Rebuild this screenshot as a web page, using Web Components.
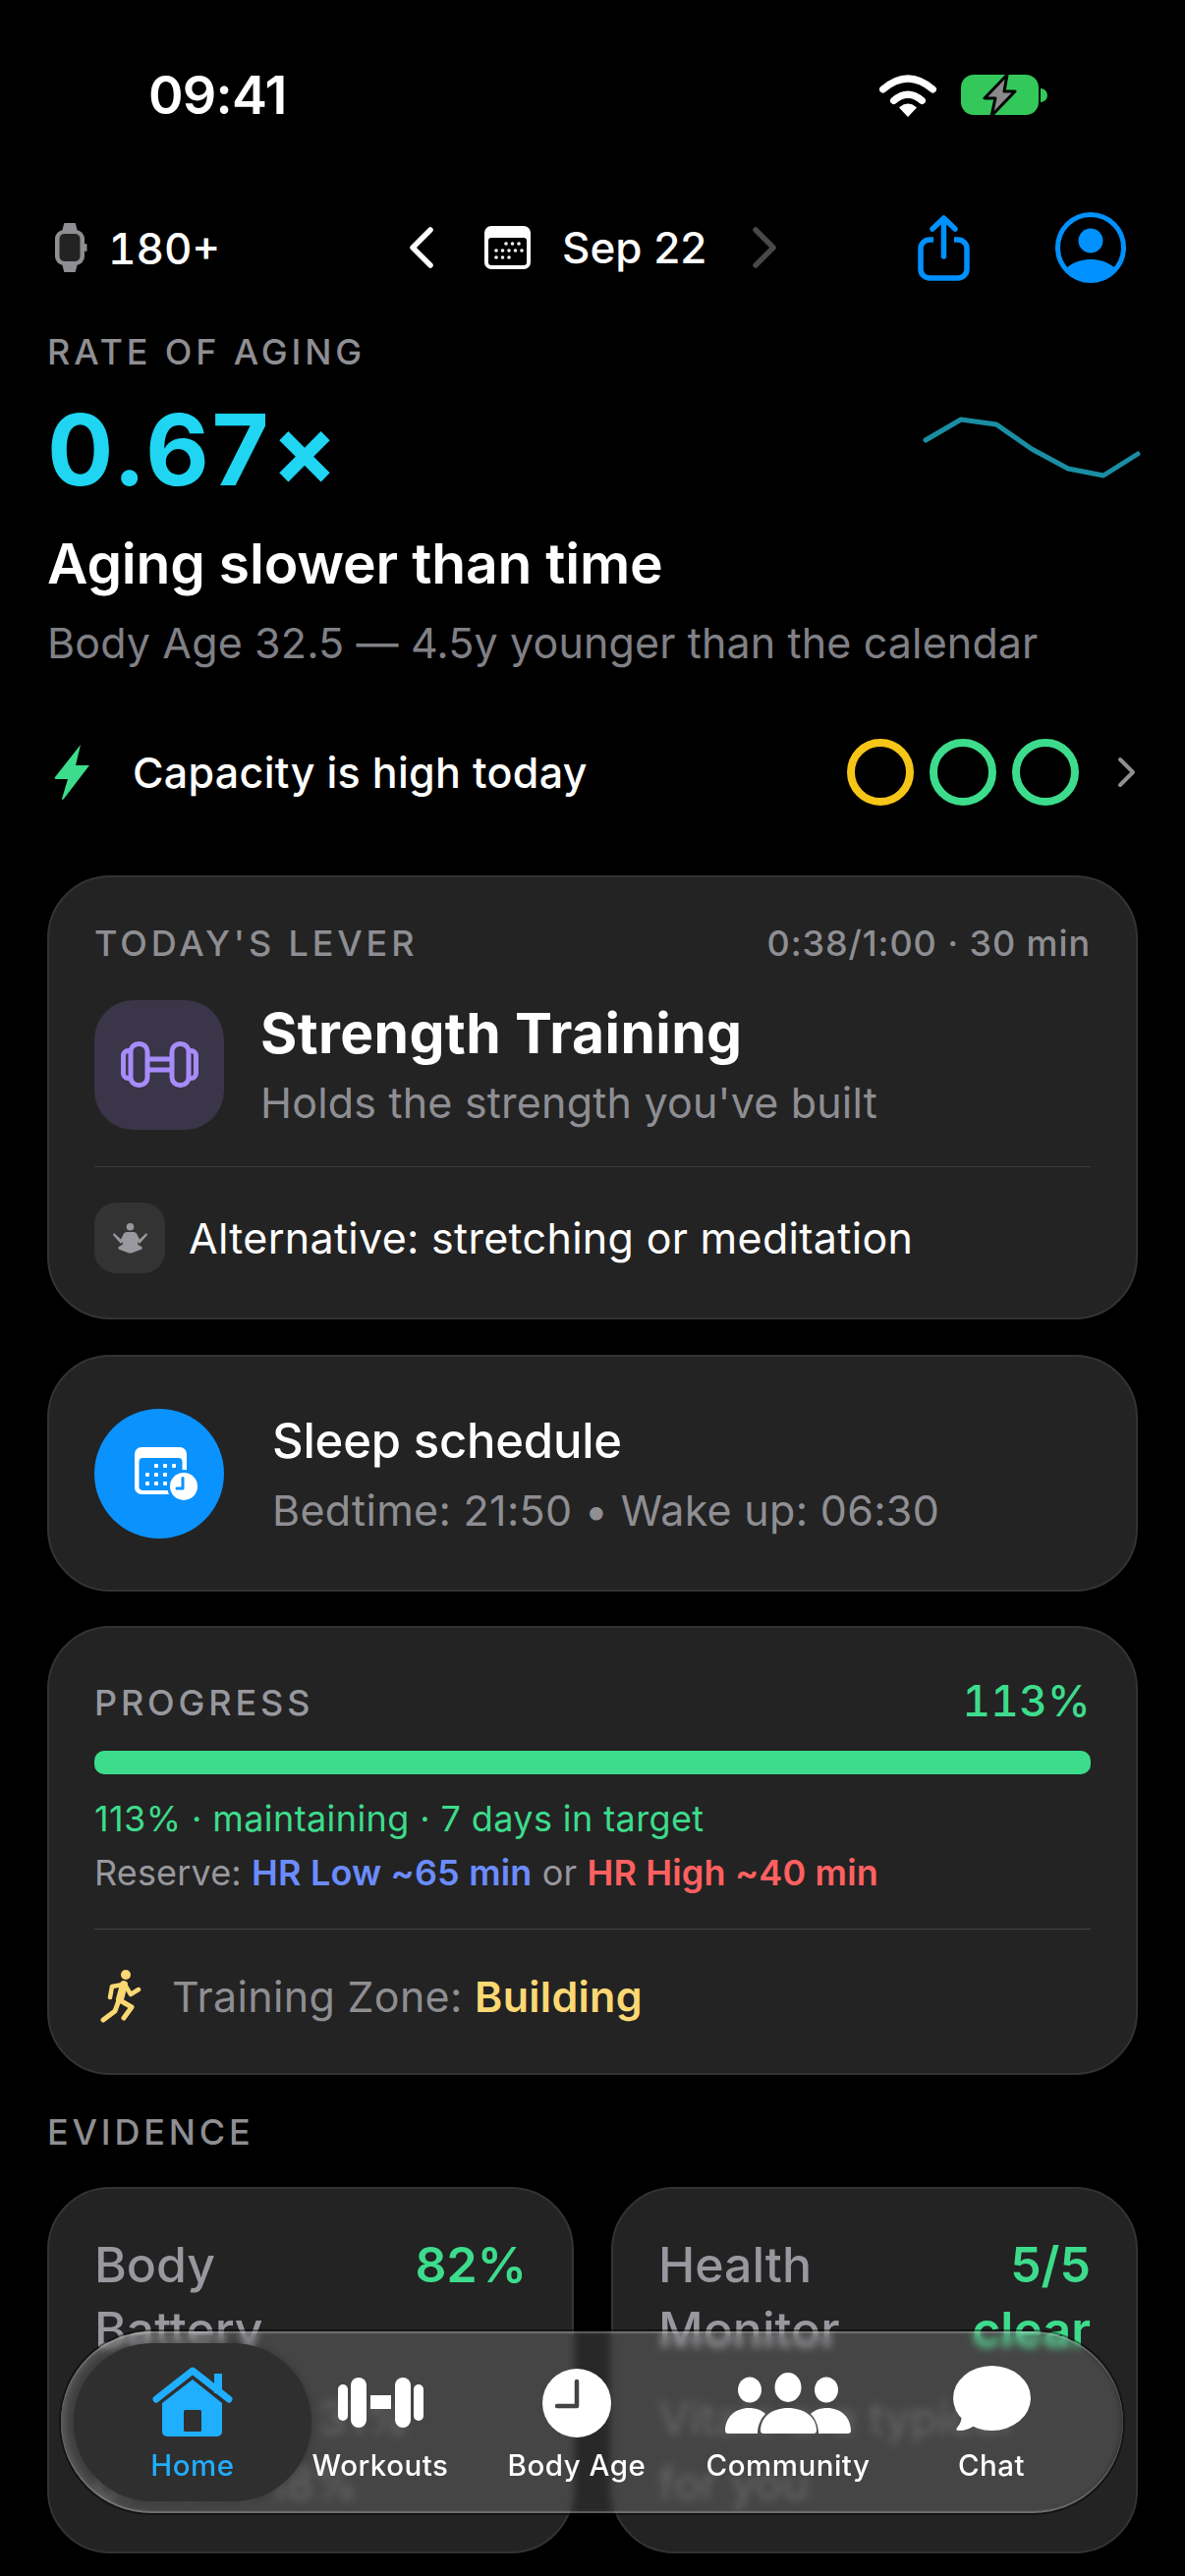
<!DOCTYPE html>
<html>
<head>
<meta charset="utf-8">
<title>Rate of Aging</title>
<style>
    html, body { margin: 0; background: #000; }
    body { font-family: Inter, "Liberation Sans", sans-serif; color: #fff; }
</style>
</head>
<body>
<app-shell>
    <status-bar></status-bar>
    <top-bar></top-bar>
    <aging-hero></aging-hero>
    <capacity-row></capacity-row>
    <lever-card></lever-card>
    <sleep-card></sleep-card>
    <progress-card></progress-card>
    <evidence-grid></evidence-grid>
    <tab-bar slot="overlay"></tab-bar>
</app-shell>

<script>
class AppShell extends HTMLElement {
    constructor() {
        super();
        this.attachShadow({ mode: 'open' });
    }

    connectedCallback() {
        this.shadowRoot.innerHTML = `
            <style>
                :host {
                    display: block;
                    position: relative;
                    width: 1206px;
                    height: 2622px;
                    overflow: hidden;
                    background: #000;
                    font-family: Inter, "Liberation Sans", sans-serif;
                }
                .page {
                    display: flex;
                    flex-direction: column;
                    padding: 0 48px;
                }
            </style>
            <div class="page"><slot></slot></div>
            <slot name="overlay"></slot>
        `;
    }
}

class AppCard extends HTMLElement {
    constructor() {
        super();
        this.attachShadow({ mode: 'open' });
    }

    connectedCallback() {
        this.shadowRoot.innerHTML = `
            <style>
                :host {
                    display: block;
                    box-sizing: border-box;
                    background: #232323;
                    border: 2px solid #333;
                    border-radius: 64px;
                }
            </style>
            <slot></slot>
        `;
    }
}

class StatusBar extends HTMLElement {
    constructor() {
        super();
        this.attachShadow({ mode: 'open' });
    }

    connectedCallback() {
        this.shadowRoot.innerHTML = `
            <style>
                :host {
                    display: flex;
                    align-items: center;
                    height: 70px;
                    margin: 62px 93px 0 103px;
                }
                .time {
                    font-size: 54px;
                    font-weight: 600;
                    letter-spacing: -0.800px;
                    color: #fff;
                    flex: 1;
                    line-height: 70px;
                }
                .icons { display: flex; align-items: center; gap: 25px; }
                svg { display: block; overflow: visible; }
            </style>
            <div class="time">09:41</div>
            <div class="icons">
                <svg width="58" height="42" viewBox="0 0 58 42">
                    <path d="M3.500 15 Q29 -7 54.500 15" fill="none" stroke="#fff" stroke-width="7" stroke-linecap="round"/>
                    <path d="M14.500 26.500 Q29 14 43.500 26.500" fill="none" stroke="#fff" stroke-width="7" stroke-linecap="round"/>
                    <path d="M21 33.500 Q29 27 37 33.500 L29 42 Z" fill="#fff" stroke="#fff" stroke-width="1.500" stroke-linejoin="round"/>
                </svg>
                <svg width="87" height="42" viewBox="0 0 87 42">
                    <rect x="0" y="0" width="79" height="41" rx="13" fill="#34c759"/>
                    <path d="M81 14 a7 7 0 0 1 0 14 z" fill="#34c759"/>
                    <path d="M47 0 L24 24 L35 24 L31 42 L55 17 L44 17 Z" fill="#8a8a8a" stroke="#000" stroke-width="3" stroke-linejoin="round"/>
                </svg>
            </div>
        `;
    }
}

class TopBar extends HTMLElement {
    constructor() {
        super();
        this.attachShadow({ mode: 'open' });
    }

    connectedCallback() {
        this.shadowRoot.innerHTML = `
            <style>
                :host {
                    display: grid;
                    grid-template-columns: 368px 156px 194px 168px 140px 72px;
                    align-items: center;
                    height: 100px;
                    margin-top: 70px;
                    color: #fff;
                    font-size: 44px;
                    font-weight: 500;
                }
                svg { display: block; overflow: visible; }
                .device { display: flex; align-items: center; gap: 22px; padding-left: 8px; }
                .device span { position: relative; top: 1px; font-variant-numeric: tabular-nums; }
                .nav { display: flex; align-items: center; gap: 52px; }
            </style>
            <div class="device">
                <svg width="32" height="50" viewBox="0 0 32 50">
                    <path d="M7 9 L9 1 Q9.200 0 10 0 H20 Q21 0 21 1 L23 9 V41 L21 49 Q21 50 20 50 H10 Q9 50 9 49 L7 41 Z" fill="#8e8e93"/>
                    <rect x="0" y="7" width="30" height="36" rx="9" fill="#8e8e93"/>
                    <rect x="30" y="21" width="2.500" height="8" rx="1" fill="#8e8e93"/>
                    <rect x="4.500" y="11" width="21" height="28" rx="5" fill="#232323"/>
                </svg>
                <span>180+</span>
            </div>
            <div class="nav">
                <svg width="25" height="42" viewBox="0 0 25 42"><path d="M22 3 L4 21 L22 39" fill="none" stroke="#fff" stroke-width="5.500" stroke-linecap="round" stroke-linejoin="round"/></svg>
                <svg width="47" height="44" viewBox="0 0 47 44">
                    <rect width="47" height="44" rx="7" fill="#fff"/>
                    <rect x="4" y="12" width="39" height="28" rx="3" fill="#000"/>
                    <g fill="#fff">
                        <circle cx="22" cy="18" r="1.800"/><circle cx="28.500" cy="18" r="1.800"/><circle cx="35" cy="18" r="1.800"/>
                        <circle cx="12" cy="25" r="1.800"/><circle cx="18.500" cy="25" r="1.800"/><circle cx="25" cy="25" r="1.800"/><circle cx="31.500" cy="25" r="1.800"/><circle cx="38" cy="25" r="1.800"/>
                        <circle cx="12" cy="32" r="1.800"/><circle cx="18.500" cy="32" r="1.800"/><circle cx="25" cy="32" r="1.800"/>
                    </g>
                </svg>
            </div>
            <div class="date">Sep 22</div>
            <div>
                <svg width="25" height="42" viewBox="0 0 25 42"><path d="M3 3 L21 21 L3 39" fill="none" stroke="#48484a" stroke-width="5.500" stroke-linecap="round" stroke-linejoin="round"/></svg>
            </div>
            <div>
                <svg width="53" height="67" viewBox="0 0 53 67">
                    <path d="M16 25 H12 a9 9 0 0 0 -9 9 V55 a9 9 0 0 0 9 9 H41 a9 9 0 0 0 9 -9 V34 a9 9 0 0 0 -9 -9 H37" fill="none" stroke="#0091ff" stroke-width="5.500"/>
                    <path d="M26.500 42 V4 M15 14 L26.500 3 L38 14" fill="none" stroke="#0091ff" stroke-width="5.500" stroke-linecap="round" stroke-linejoin="round"/>
                </svg>
            </div>
            <div>
                <svg width="72" height="72" viewBox="0 0 72 72">
                    <circle cx="36" cy="36" r="33.500" fill="none" stroke="#0091ff" stroke-width="5"/>
                    <circle cx="36" cy="29" r="12.500" fill="#0091ff"/>
                    <path d="M12 56 C20 50 28 48 36 48 C44 48 52 50 60 56 C53 66 45 70 36 70 C27 70 19 66 12 56 Z" fill="#0091ff"/>
                </svg>
            </div>
        `;
    }
}

class AgingHero extends HTMLElement {
    constructor() {
        super();
        this.attachShadow({ mode: 'open' });
    }

    connectedCallback() {
        this.shadowRoot.innerHTML = `
            <style>
                :host { display: block; position: relative; margin-top: 36px; }
                .label {
                    font-size: 36px;
                    line-height: 40px;
                    font-weight: 500;
                    letter-spacing: 3.850px;
                    color: #8e8e93;
                }
                .value {
                    font-size: 100px;
                    line-height: 100px;
                    font-weight: 700;
                    color: #1fd5f2;
                    margin-top: 30px;
                    letter-spacing: 2.500px;
                }
                .title {
                    font-size: 57px;
                    line-height: 70px;
                    font-weight: 600;
                    letter-spacing: -0.200px;
                    color: #fff;
                    margin-top: 31px;
                }
                .sub {
                    font-size: 43px;
                    line-height: 56px;
                    color: #808086;
                    margin-top: 17px;
                    letter-spacing: 0.130px;
                }
                svg { position: absolute; right: 0; top: 0; overflow: visible; }
            </style>
            <div class="label">RATE OF AGING</div>
            <div class="value">0.67×</div>
            <div class="title">Aging slower than time</div>
            <div class="sub">Body Age 32.5 — 4.5y younger than the calendar</div>
            <svg width="216" height="100" viewBox="942 338 216 100">
                <path d="M942 448 L978 427 L1014 432 L1050 457 L1087 477 L1123 484 L1158 462" fill="none" stroke="#1a8ea3" stroke-width="5" stroke-linecap="round" stroke-linejoin="round"/>
            </svg>
        `;
    }
}

class CapacityRow extends HTMLElement {
    constructor() {
        super();
        this.attachShadow({ mode: 'open' });
    }

    connectedCallback() {
        this.shadowRoot.innerHTML = `
            <style>
                :host {
                    display: flex;
                    align-items: center;
                    height: 68px;
                    margin-top: 70px;
                    font-size: 43px;
                    font-weight: 500;
                    color: #fff;
                }
                svg { display: block; flex: none; }
                .bolt { margin: 0 44px 0 7px; }
                .text { flex: 1; letter-spacing: 0.300px; }
                .rings { display: flex; gap: 16px; }
                .ring {
                    box-sizing: border-box;
                    width: 68px;
                    height: 68px;
                    border-radius: 50%;
                    border: 8px solid #3ddc8c;
                }
                .ring.warn { border-color: #f5c518; }
                .more { margin-left: 39px; margin-right: 2px; }
            </style>
            <svg class="bolt" width="36" height="56" viewBox="0 0 36 56">
                <path d="M27 0 L1 33 Q0 35 2 35 H14 L8 55 Q8 57 10 55 L36 21 H22 Z" fill="#3ddc8c"/>
            </svg>
            <div class="text">Capacity is high today</div>
            <div class="rings">
                <div class="ring warn"></div>
                <div class="ring"></div>
                <div class="ring"></div>
            </div>
            <svg class="more" width="19" height="32" viewBox="0 0 19 32">
                <path d="M3 3 L16 16 L3 29" fill="none" stroke="#8e8e93" stroke-width="4" stroke-linecap="round" stroke-linejoin="round"/>
            </svg>
        `;
    }
}

class LeverCard extends HTMLElement {
    constructor() {
        super();
        this.attachShadow({ mode: 'open' });
    }

    connectedCallback() {
        this.shadowRoot.innerHTML = `
            <style>
                :host { display: block; margin-top: 71px; }
                app-card { padding: 47px 46px 45px; }
                .head {
                    display: flex;
                    justify-content: space-between;
                    align-items: center;
                    line-height: 40px;
                    font-weight: 500;
                    color: #8e8e93;
                }
                .eyebrow { font-size: 36px; letter-spacing: 3.850px; }
                .meta { font-size: 36px; letter-spacing: 0.900px; }
                .main { display: flex; align-items: center; gap: 37px; margin-top: 37px; }
                .tile {
                    width: 132px;
                    height: 132px;
                    border-radius: 40px;
                    background: #3a3548;
                    display: flex;
                    align-items: center;
                    justify-content: center;
                    flex: none;
                }
                .name { font-size: 57px; line-height: 70px; font-weight: 700; letter-spacing: 0.400px; color: #fff; }
                .why { font-size: 43px; line-height: 56px; color: #8e8e93; letter-spacing: 0.200px; margin-top: 7px; }
                hr { border: 0; height: 1px; background: #3c3c3c; margin: 37px 0 36px; }
                .alt { display: flex; align-items: center; gap: 24px; font-size: 43px; color: #fff; letter-spacing: 0.300px; }
                .alt .tile { width: 72px; height: 72px; border-radius: 22px; background: #333; }
            </style>
            <app-card>
                <div class="head">
                    <span class="eyebrow">TODAY'S LEVER</span>
                    <span class="meta">0:38/1:00 · 30 min</span>
                </div>
                <div class="main">
                    <div class="tile">
                        <svg width="79" height="47" viewBox="0 0 79 47" fill="none" stroke="#a78bfa" stroke-width="5">
                            <rect x="2.500" y="9.500" width="12" height="28" rx="5"/>
                            <rect x="64.500" y="9.500" width="12" height="28" rx="5"/>
                            <rect x="10" y="2.500" width="17" height="42" rx="8" fill="#3a3548"/>
                            <rect x="52" y="2.500" width="17" height="42" rx="8" fill="#3a3548"/>
                            <path d="M27 18 H52 M27 29 H52"/>
                        </svg>
                    </div>
                    <div>
                        <div class="name">Strength Training</div>
                        <div class="why">Holds the strength you've built</div>
                    </div>
                </div>
                <hr>
                <div class="alt">
                    <div class="tile">
                        <svg width="35" height="31" viewBox="0 0 35 31" fill="#98989e">
                            <circle cx="17.500" cy="3.800" r="3.800"/>
                            <path d="M1 10 L8 16.500 L11 10.500 Q12 9 14 9 H21 Q23 9 24 10.500 L27 16.500 L34 10 L35 12 L27 21 L25.500 19 L25 21.500 L29 24 Q31 26 28 27 L20 30 Q17.500 31 15 30 L7 27 Q4 26 6 24 L10 21.500 L9.500 19 L8 21 L0 12 Z"/>
                        </svg>
                    </div>
                    <span>Alternative: stretching or meditation</span>
                </div>
            </app-card>
        `;
    }
}

class SleepCard extends HTMLElement {
    constructor() {
        super();
        this.attachShadow({ mode: 'open' });
    }

    connectedCallback() {
        this.shadowRoot.innerHTML = `
            <style>
                :host { display: block; margin-top: 36px; }
                app-card {
                    display: flex;
                    align-items: center;
                    gap: 49px;
                    height: 241px;
                    padding: 0 46px;
                }
                .disc {
                    width: 132px;
                    height: 132px;
                    border-radius: 50%;
                    background: #0a92ff;
                    display: flex;
                    align-items: center;
                    justify-content: center;
                    flex: none;
                }
                .disc svg { margin-left: 13px; }
                .name { font-size: 49px; line-height: 64px; font-weight: 500; letter-spacing: -0.200px; color: #fff; }
                .times { font-size: 43px; line-height: 56px; color: #8e8e93; margin-top: 10px; letter-spacing: 0.300px; }
            </style>
            <app-card>
                <div class="disc">
                    <svg width="64" height="54" viewBox="0 0 64 54">
                        <rect x="0" y="0" width="53" height="48" rx="7" fill="#fff"/>
                        <rect x="4.500" y="11" width="44" height="33" rx="4" fill="#0a92ff"/>
                        <g fill="#fff">
                            <rect x="20" y="17" width="4" height="4" rx="1"/><rect x="29" y="17" width="4" height="4" rx="1"/><rect x="38" y="17" width="4" height="4" rx="1"/>
                            <rect x="11" y="26" width="4" height="4" rx="1"/><rect x="20" y="26" width="4" height="4" rx="1"/><rect x="29" y="26" width="4" height="4" rx="1"/>
                            <rect x="11" y="35" width="4" height="4" rx="1"/><rect x="20" y="35" width="4" height="4" rx="1"/><rect x="29" y="35" width="4" height="4" rx="1"/>
                        </g>
                        <circle cx="50" cy="40" r="17" fill="#0a92ff"/>
                        <circle cx="50" cy="40" r="14" fill="#fff"/>
                        <path d="M49 31.500 V42 H43" fill="none" stroke="#0a92ff" stroke-width="3" stroke-linecap="round" stroke-linejoin="round"/>
                    </svg>
                </div>
                <div>
                    <div class="name">Sleep schedule</div>
                    <div class="times">Bedtime: 21:50 • Wake up: 06:30</div>
                </div>
            </app-card>
        `;
    }
}

class ProgressCard extends HTMLElement {
    constructor() {
        super();
        this.attachShadow({ mode: 'open' });
    }

    connectedCallback() {
        this.shadowRoot.innerHTML = `
            <style>
                :host { display: block; margin-top: 35px; }
                app-card { padding: 52px 46px 0; height: 457px; }
                .head { display: flex; justify-content: space-between; align-items: flex-end; height: 44px; }
                .eyebrow { font-size: 36px; line-height: 40px; font-weight: 500; letter-spacing: 3.850px; color: #98989e; }
                .pct { font-size: 44px; line-height: 44px; font-weight: 500; color: #3ddc8c; letter-spacing: 0.300px; font-variant-numeric: tabular-nums; }
                .bar { height: 24px; border-radius: 10px; background: #3ddc8c; margin-top: 29px; }
                .status { font-size: 36px; line-height: 50px; color: #3ddc8c; margin-top: 20px; letter-spacing: 0.400px; }
                .reserve { font-size: 36px; line-height: 50px; color: #98989e; margin-top: 5px; letter-spacing: 0.150px; }
                .low { color: #6b8cff; font-weight: 600; }
                .high { color: #ff6060; font-weight: 600; }
                hr { border: 0; height: 1px; background: #434343; margin: 32px 0 0; }
                .zone { display: flex; align-items: center; gap: 31px; height: 136px; font-size: 43px; color: #8e8e93; padding-left: 6px; letter-spacing: 0.300px; }
                .zone b { color: #fcd873; font-weight: 600; }
                svg { display: block; flex: none; }
            </style>
            <app-card>
                <div class="head">
                    <span class="eyebrow">PROGRESS</span>
                    <span class="pct">113%</span>
                </div>
                <div class="bar"></div>
                <div class="status">113% · maintaining · 7 days in target</div>
                <div class="reserve">Reserve: <span class="low">HR Low ~65 min</span> or <span class="high">HR High ~40 min</span></div>
                <hr>
                <div class="zone">
                    <svg width="42" height="54" viewBox="0 0 42 54" fill="none" stroke="#fcd873" stroke-linecap="round" stroke-linejoin="round">
                        <circle cx="26" cy="5" r="5" fill="#fcd873" stroke="none"/>
                        <path d="M24 15 L20 30" stroke-width="8"/>
                        <path d="M23 15 L12 17 L10 28" stroke-width="4.500"/>
                        <path d="M25 15 L31 25 L39 20" stroke-width="4.500"/>
                        <path d="M20 31 L32 38 L24 49" stroke-width="5"/>
                        <path d="M19 31 L15 42 L3 51" stroke-width="5"/>
                    </svg>
                    <span>Training Zone: <b>Building</b></span>
                </div>
            </app-card>
        `;
    }
}

class EvidenceCard extends HTMLElement {
    constructor() {
        super();
        this.attachShadow({ mode: 'open' });
    }

    connectedCallback() {
        this.shadowRoot.innerHTML = `
            <style>
                :host { display: block; }
                app-card { padding: 44px 46px 34px; height: 373px; }
                .head { display: flex; justify-content: space-between; font-size: 50px; line-height: 66px; font-weight: 500; }
                .name { color: #98989e; }
                .value { color: #3ddc8c; text-align: right; font-weight: 600; }
                .note { font-size: 46px; line-height: 66px; color: #4c4c4c; margin-top: 24px; }
            </style>
            <app-card>
                <div class="head">
                    <div class="name"><slot name="name"></slot></div>
                    <div class="value"><slot name="value"></slot></div>
                </div>
                <div class="note"><slot name="note"></slot></div>
            </app-card>
        `;
    }
}

class EvidenceGrid extends HTMLElement {
    constructor() {
        super();
        this.attachShadow({ mode: 'open' });
    }

    connectedCallback() {
        this.shadowRoot.innerHTML = `
            <style>
                :host { display: block; margin-top: 38px; }
                .label { font-size: 36px; line-height: 40px; font-weight: 500; letter-spacing: 3.800px; color: #8e8e93; }
                .grid { display: grid; grid-template-columns: 536px 536px; gap: 38px; margin-top: 36px; }
            </style>
            <div class="label">EVIDENCE</div>
            <div class="grid">
                <evidence-card>
                    <span slot="name">Body<br>Battery</span>
                    <span slot="value">82%</span>
                    <span slot="note">Resting at 31%<br>of base 18%</span>
                </evidence-card>
                <evidence-card>
                    <span slot="name">Health<br>Monitor</span>
                    <span slot="value">5/5<br>clear</span>
                    <span slot="note">Vitals are typical<br>for you</span>
                </evidence-card>
            </div>
        `;
    }
}

class TabItem extends HTMLElement {
    constructor() {
        super();
        this.attachShadow({ mode: 'open' });
    }

    connectedCallback() {
        this.shadowRoot.innerHTML = `
            <style>
                :host {
                    display: flex;
                    flex-direction: column;
                    align-items: center;
                    color: #fff;
                    font-size: 29.500px;
                    font-weight: 500;
                    letter-spacing: 0.500px;
                    height: 161px;
                    box-sizing: border-box;
                    padding-top: 24px;
                }
                :host([active]) { color: #20aeff; }
                .icon { height: 72px; display: flex; align-items: flex-end; justify-content: center; }
                .name { margin-top: 10px; line-height: 36px; white-space: nowrap; }
            </style>
            <div class="icon"><slot></slot></div>
            <div class="name">${this.getAttribute('label') || ''}</div>
        `;
    }
}

class TabBar extends HTMLElement {
    constructor() {
        super();
        this.attachShadow({ mode: 'open' });
    }

    connectedCallback() {
        this.shadowRoot.innerHTML = `
            <style>
                :host {
                    position: absolute;
                    left: 62px;
                    top: 2373px;
                    width: 1081px;
                    height: 185px;
                    box-sizing: border-box;
                    padding: 12px 13px;
                    display: grid;
                    grid-template-columns: 242px 140px 260px 170px 244px;
                    border-radius: 92px;
                    background: rgba(255, 255, 255, 0.155);
                    -webkit-backdrop-filter: blur(4px);
                    backdrop-filter: blur(4px);
                    box-shadow: 0 0 0 2px rgba(0, 0, 0, 0.45),
                        inset 0 2px 1px rgba(255, 255, 255, 0.22),
                        inset 0 -2px 1px rgba(255, 255, 255, 0.22),
                        inset 4px 0 6px rgba(255, 255, 255, 0.12),
                        inset -3px 0 4px rgba(0, 0, 0, 0.2);
                }
                tab-item[active] {
                    background: #2f2f2f;
                    border-radius: 80px;
                    box-shadow: 0 0 8px rgba(0, 0, 0, 0.25);
                }
                svg { display: block; }
            </style>
            <tab-item label="Home" active>
                <svg width="82" height="72" viewBox="0 0 82 72" fill="#20aeff">
                    <rect x="63" y="7" width="8" height="20"/>
                    <path d="M4 33 L41 4 L78 33" fill="none" stroke="#20aeff" stroke-width="7" stroke-linecap="round" stroke-linejoin="round"/>
                    <path d="M41 13 L71 37 V66 a5 5 0 0 1 -5 5 H15 a5 5 0 0 1 -5 -5 V37 Z"/>
                    <rect x="32" y="44" width="18" height="22" rx="1.500" fill="#2f2f2f"/>
                </svg>
            </tab-item>
            <tab-item label="Workouts">
                <svg width="87" height="51" viewBox="0 0 87 51" fill="#fff" style="margin-bottom:10px">
                    <rect x="0" y="7" width="10" height="37" rx="5"/>
                    <rect x="13" y="0" width="16" height="51" rx="8"/>
                    <rect x="33" y="18" width="21" height="14"/>
                    <rect x="58" y="0" width="16" height="51" rx="8"/>
                    <rect x="77" y="7" width="10" height="37" rx="5"/>
                </svg>
            </tab-item>
            <tab-item label="Body Age">
                <svg width="70" height="70" viewBox="0 0 70 70">
                    <circle cx="35" cy="35" r="35" fill="#fff"/>
                    <path d="M35 13 V38 H15" fill="none" stroke="#444" stroke-width="4.500" stroke-linecap="round" stroke-linejoin="round"/>
                </svg>
            </tab-item>
            <tab-item label="Community">
                <svg width="128" height="62" viewBox="0 0 128 62" fill="#fff" style="margin-bottom:4px">
                    <ellipse cx="64" cy="15" rx="13.500" ry="15"/>
                    <ellipse cx="25" cy="17.500" rx="12" ry="13"/>
                    <ellipse cx="103" cy="17.500" rx="12" ry="13"/>
                    <path d="M0 59 C0 45 11 36 24 36 C31 36 37 38 41 42 C36 47 33 54 33 62 H3 Q0 62 0 59 Z"/>
                    <path d="M128 59 C128 45 117 36 104 36 C97 36 91 38 87 42 C92 47 95 54 95 62 H125 Q128 62 128 59 Z"/>
                    <path d="M36 59 C36 45 48 36 64 36 C80 36 93 45 93 59 Q93 62 90 62 H39 Q36 62 36 59 Z"/>
                </svg>
            </tab-item>
            <tab-item label="Chat">
                <svg width="80" height="67" viewBox="0 0 80 67" fill="#fff" style="margin-bottom:6px">
                    <ellipse cx="40.500" cy="33" rx="39.500" ry="33"/>
                    <path d="M10 48 Q10 58 5 63 Q3 66 7 66 Q16 66 24 60 Z"/>
                </svg>
            </tab-item>
        `;
    }
}

customElements.define('app-shell', AppShell);
customElements.define('app-card', AppCard);
customElements.define('status-bar', StatusBar);
customElements.define('top-bar', TopBar);
customElements.define('aging-hero', AgingHero);
customElements.define('capacity-row', CapacityRow);
customElements.define('lever-card', LeverCard);
customElements.define('sleep-card', SleepCard);
customElements.define('progress-card', ProgressCard);
customElements.define('evidence-card', EvidenceCard);
customElements.define('evidence-grid', EvidenceGrid);
customElements.define('tab-item', TabItem);
customElements.define('tab-bar', TabBar);
</script>
</body>
</html>
